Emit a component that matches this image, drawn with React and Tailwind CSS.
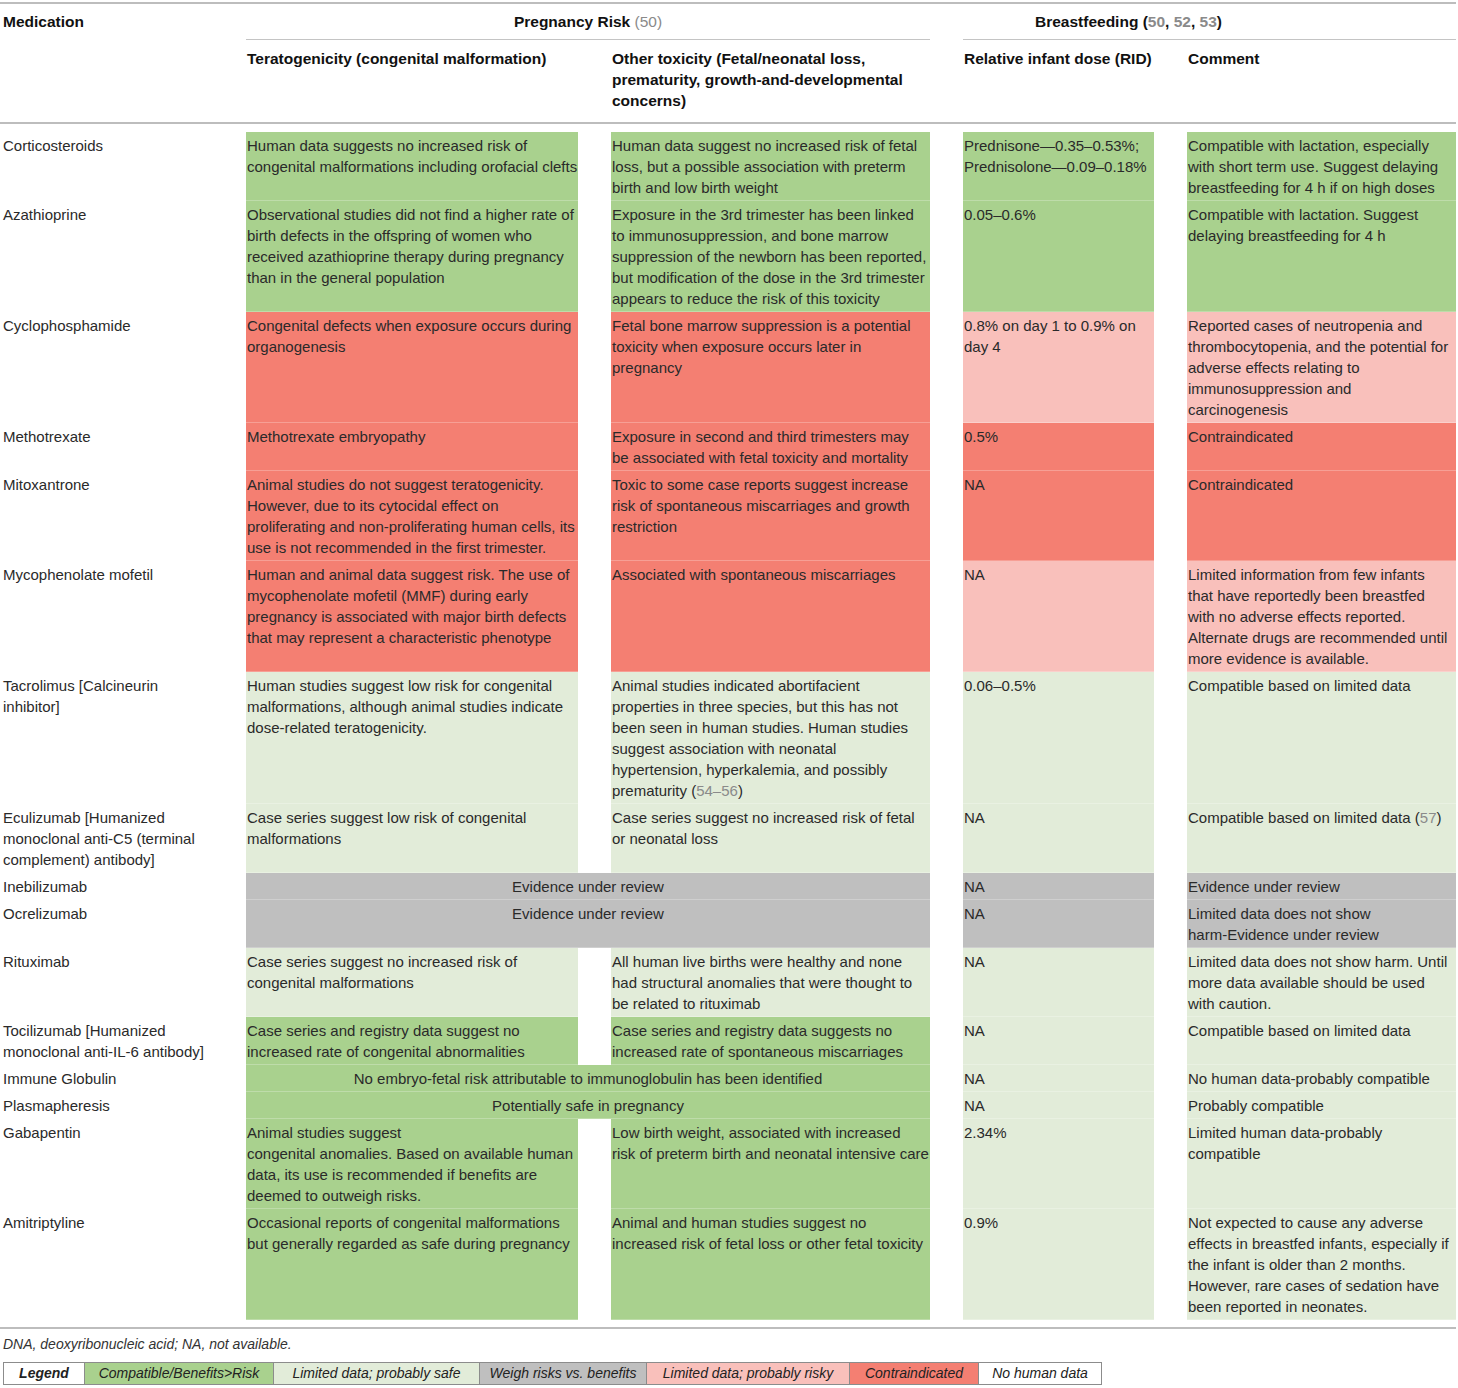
import React from "react";

const BG = {
  G: "bg-[#a9d18e]",
  L: "bg-[#e2ecd9]",
  X: "bg-[#bfbfbf]",
  P: "bg-[#f9c0bb]",
  R: "bg-[#f47f72]",
  W: "",
};

const Ref = ({ children }) => <span className="text-[#8a8a8a]">{children}</span>;

const cols = "grid grid-cols-[246px_332px_33px_319px_33px_191px_33px_269px]";

const c = (bg, lines, opts = {}) => ({ bg, lines, ...opts });
const gap = (bg = "W") => ({ bg, lines: [] });

const rows = [
  {
    med: ["Corticosteroids"],
    cells: [
      c("G", ["Human data suggests no increased risk of", "congenital malformations including orofacial clefts"]),
      gap(),
      c("G", ["Human data suggest no increased risk of fetal", "loss, but a possible association with preterm", "birth and low birth weight"]),
      gap(),
      c("G", ["Prednisone—0.35–0.53%;", "Prednisolone—0.09–0.18%"]),
      gap(),
      c("G", ["Compatible with lactation, especially", "with short term use. Suggest delaying", "breastfeeding for 4 h if on high doses"]),
    ],
  },
  {
    med: ["Azathioprine"],
    cells: [
      c("G", ["Observational studies did not find a higher rate of", "birth defects in the offspring of women who", "received azathioprine therapy during pregnancy", "than in the general population"]),
      gap(),
      c("G", ["Exposure in the 3rd trimester has been linked", "to immunosuppression, and bone marrow", "suppression of the newborn has been reported,", "but modification of the dose in the 3rd trimester", "appears to reduce the risk of this toxicity"]),
      gap(),
      c("G", ["0.05–0.6%"]),
      gap(),
      c("G", ["Compatible with lactation. Suggest", "delaying breastfeeding for 4 h"]),
    ],
  },
  {
    med: ["Cyclophosphamide"],
    cells: [
      c("R", ["Congenital defects when exposure occurs during", "organogenesis"]),
      gap(),
      c("R", ["Fetal bone marrow suppression is a potential", "toxicity when exposure occurs later in", "pregnancy"]),
      gap(),
      c("P", ["0.8% on day 1 to 0.9% on", "day 4"]),
      gap(),
      c("P", ["Reported cases of neutropenia and", "thrombocytopenia, and the potential for", "adverse effects relating to", "immunosuppression and", "carcinogenesis"]),
    ],
  },
  {
    med: ["Methotrexate"],
    cells: [
      c("R", ["Methotrexate embryopathy"]),
      gap(),
      c("R", ["Exposure in second and third trimesters may", "be associated with fetal toxicity and mortality"]),
      gap(),
      c("R", ["0.5%"]),
      gap(),
      c("R", ["Contraindicated"]),
    ],
  },
  {
    med: ["Mitoxantrone"],
    cells: [
      c("R", ["Animal studies do not suggest teratogenicity.", "However, due to its cytocidal effect on", "proliferating and non-proliferating human cells, its", "use is not recommended in the first trimester."]),
      gap(),
      c("R", ["Toxic to some case reports suggest increase", "risk of spontaneous miscarriages and growth", "restriction"]),
      gap(),
      c("R", ["NA"]),
      gap(),
      c("R", ["Contraindicated"]),
    ],
  },
  {
    med: ["Mycophenolate mofetil"],
    cells: [
      c("R", ["Human and animal data suggest risk. The use of", "mycophenolate mofetil (MMF) during early", "pregnancy is associated with major birth defects", "that may represent a characteristic phenotype"]),
      gap(),
      c("R", ["Associated with spontaneous miscarriages"]),
      gap(),
      c("P", ["NA"]),
      gap(),
      c("P", ["Limited information from few infants", "that have reportedly been breastfed", "with no adverse effects reported.", "Alternate drugs are recommended until", "more evidence is available."]),
    ],
  },
  {
    med: ["Tacrolimus [Calcineurin", "inhibitor]"],
    cells: [
      c("L", ["Human studies suggest low risk for congenital", "malformations, although animal studies indicate", "dose-related teratogenicity."]),
      gap(),
      c("L", ["Animal studies indicated abortifacient", "properties in three species, but this has not", "been seen in human studies. Human studies", "suggest association with neonatal", "hypertension, hyperkalemia, and possibly", <>prematurity (<Ref>54–56</Ref>)</>]),
      gap(),
      c("L", ["0.06–0.5%"]),
      gap(),
      c("L", ["Compatible based on limited data"]),
    ],
  },
  {
    med: ["Eculizumab [Humanized", "monoclonal anti-C5 (terminal", "complement) antibody]"],
    cells: [
      c("L", ["Case series suggest low risk of congenital", "malformations"]),
      gap(),
      c("L", ["Case series suggest no increased risk of fetal", "or neonatal loss"]),
      gap(),
      c("L", ["NA"]),
      gap(),
      c("L", [<>Compatible based on limited data (<Ref>57</Ref>)</>]),
    ],
  },
  {
    med: ["Inebilizumab"],
    cells: [
      c("X", ["Evidence under review"], { span: true }),
      gap(),
      c("X", ["NA"]),
      gap(),
      c("X", ["Evidence under review"]),
    ],
  },
  {
    med: ["Ocrelizumab"],
    cells: [
      c("X", ["Evidence under review"], { span: true }),
      gap(),
      c("X", ["NA"]),
      gap(),
      c("X", ["Limited data does not show", "harm-Evidence under review"]),
    ],
  },
  {
    med: ["Rituximab"],
    cells: [
      c("L", ["Case series suggest no increased risk of", "congenital malformations"]),
      gap(),
      c("L", ["All human live births were healthy and none", "had structural anomalies that were thought to", "be related to rituximab"]),
      gap(),
      c("L", ["NA"]),
      gap(),
      c("L", ["Limited data does not show harm. Until", "more data available should be used", "with caution."]),
    ],
  },
  {
    med: ["Tocilizumab [Humanized", "monoclonal anti-IL-6 antibody]"],
    cells: [
      c("G", ["Case series and registry data suggest no", "increased rate of congenital abnormalities"]),
      gap(),
      c("G", ["Case series and registry data suggests no", "increased rate of spontaneous miscarriages"]),
      gap(),
      c("L", ["NA"]),
      gap(),
      c("L", ["Compatible based on limited data"]),
    ],
  },
  {
    med: ["Immune Globulin"],
    cells: [
      c("G", ["No embryo-fetal risk attributable to immunoglobulin has been identified"], { span: true }),
      gap(),
      c("L", ["NA"]),
      gap(),
      c("L", ["No human data-probably compatible"]),
    ],
  },
  {
    med: ["Plasmapheresis"],
    cells: [
      c("G", ["Potentially safe in pregnancy"], { span: true }),
      gap(),
      c("L", ["NA"]),
      gap(),
      c("L", ["Probably compatible"]),
    ],
  },
  {
    med: ["Gabapentin"],
    cells: [
      c("G", ["Animal studies suggest", "congenital anomalies. Based on available human", "data, its use is recommended if benefits are", "deemed to outweigh risks."]),
      gap(),
      c("G", ["Low birth weight, associated with increased", "risk of preterm birth and neonatal intensive care"]),
      gap(),
      c("L", ["2.34%"]),
      gap(),
      c("L", ["Limited human data-probably", "compatible"]),
    ],
  },
  {
    med: ["Amitriptyline"],
    cells: [
      c("G", ["Occasional reports of congenital malformations", "but generally regarded as safe during pregnancy"]),
      gap(),
      c("G", ["Animal and human studies suggest no", "increased risk of fetal loss or other fetal toxicity"]),
      gap(),
      c("L", ["0.9%"]),
      gap(),
      c("L", ["Not expected to cause any adverse", "effects in breastfed infants, especially if", "the infant is older than 2 months.", "However, rare cases of sedation have", "been reported in neonates."]),
    ],
  },
];

function Lines({ lines }) {
  return lines.map((l, i) => (
    <div key={i} className="whitespace-nowrap">
      {l}
    </div>
  ));
}

function BodyRow({ row }) {
  return (
    <div className={cols}>
      <div className="pl-[3px] pt-[3px] pb-[2px] border-b border-transparent">
        <Lines lines={row.med} />
      </div>
      {row.cells.map((cell, i) => (
        <div
          key={i}
          className={`${BG[cell.bg]} ${cell.span ? "col-span-3 text-center" : "pl-[1px]"} pt-[3px] pb-[2px] border-b ${cell.bg === "W" ? "border-transparent" : "border-white/25"}`}
        >
          <Lines lines={cell.lines} />
        </div>
      ))}
    </div>
  );
}

const legend = [
  ["Legend", "bg-white font-bold", "w-[80px]"],
  ["Compatible/Benefits>Risk", BG.G, "w-[189px]"],
  ["Limited data; probably safe", BG.L, "w-[206px]"],
  ["Weigh risks vs. benefits", BG.X, "w-[167px]"],
  ["Limited data; probably risky", BG.P, "w-[203px]"],
  ["Contraindicated", BG.R, "w-[129px]"],
  ["No human data", "bg-white", "w-[123px]"],
];

export default function App() {
  return (
    <div className="w-[1458px] min-h-[1388px] bg-white text-[#2a2a2a] text-[15px] leading-[21px] font-['Liberation_Sans',Arial,sans-serif] pt-[2px]">
      <div className="w-[1456px]">
        {/* header */}
        <div className="border-t-2 border-[#bdbdbd]">
          <div className={cols}>
            <div className="pl-[3px] pt-[7px] pb-[7px] font-bold text-[15.5px] text-[#111]">Medication</div>
            <div className="col-span-3 text-center pt-[7px] pb-[7px] border-b border-[#c4c4c4] text-[15.5px]">
              <span className="font-bold text-[#111]">Pregnancy Risk </span>
              <Ref>(50)</Ref>
            </div>
            <div />
            <div className="col-span-3 pl-[72px] pt-[7px] pb-[7px] border-b border-[#c4c4c4] text-[15.5px] font-bold text-[#111]">
              Breastfeeding (<Ref>50</Ref>, <Ref>52</Ref>, <Ref>53</Ref>)
            </div>
          </div>
          <div className={`${cols} border-b-2 border-[#bdbdbd] font-bold text-[15.5px] text-[#111]`}>
            <div />
            <div className="pl-[1px] pt-[8px] pb-[11px]">Teratogenicity (congenital malformation)</div>
            <div />
            <div className="pl-[1px] pt-[8px] pb-[11px]">
              <Lines lines={["Other toxicity (Fetal/neonatal loss,", "prematurity, growth-and-developmental", "concerns)"]} />
            </div>
            <div />
            <div className="pl-[1px] pt-[8px] pb-[11px]">Relative infant dose (RID)</div>
            <div />
            <div className="pl-[1px] pt-[8px] pb-[11px]">Comment</div>
          </div>
        </div>

        {/* body */}
        <div className="pt-[8px] pb-[7px] border-b-2 border-[#bdbdbd]">
          {rows.map((r, i) => (
            <BodyRow key={i} row={r} />
          ))}
        </div>
      </div>

      <div className="pl-[3px] pt-[5px] italic text-[14px] text-[#333]">DNA, deoxyribonucleic acid; NA, not available.</div>

      <div className="ml-[3px] mt-[7px] flex w-fit border border-[#8c8c8c] italic text-[14px] leading-[21px] text-[#222]">
        {legend.map(([t, bg, w], i) => (
          <div key={i} className={`${bg} ${w} text-center ${i > 0 ? "border-l border-[#8c8c8c]" : ""}`}>
            {t}
          </div>
        ))}
      </div>
    </div>
  );
}
